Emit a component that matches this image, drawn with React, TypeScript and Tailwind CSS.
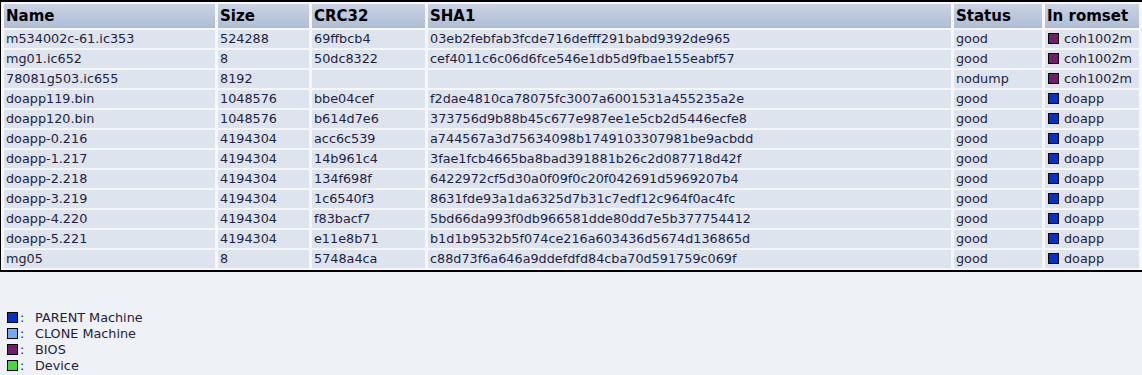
import React from "react";

type Rom = {
	name: string;
	size: string;
	crc: string;
	sha1: string;
	status: string;
	set: string;
	kind: "bios" | "parent";
};

const roms: Rom[] = [
	{ name: "m534002c-61.ic353", size: "524288", crc: "69ffbcb4", sha1: "03eb2febfab3fcde716defff291babd9392de965", status: "good", set: "coh1002m", kind: "bios" },
	{ name: "mg01.ic652", size: "8", crc: "50dc8322", sha1: "cef4011c6c06d6fce546e1db5d9fbae155eabf57", status: "good", set: "coh1002m", kind: "bios" },
	{ name: "78081g503.ic655", size: "8192", crc: "", sha1: "", status: "nodump", set: "coh1002m", kind: "bios" },
	{ name: "doapp119.bin", size: "1048576", crc: "bbe04cef", sha1: "f2dae4810ca78075fc3007a6001531a455235a2e", status: "good", set: "doapp", kind: "parent" },
	{ name: "doapp120.bin", size: "1048576", crc: "b614d7e6", sha1: "373756d9b88b45c677e987ee1e5cb2d5446ecfe8", status: "good", set: "doapp", kind: "parent" },
	{ name: "doapp-0.216", size: "4194304", crc: "acc6c539", sha1: "a744567a3d75634098b1749103307981be9acbdd", status: "good", set: "doapp", kind: "parent" },
	{ name: "doapp-1.217", size: "4194304", crc: "14b961c4", sha1: "3fae1fcb4665ba8bad391881b26c2d087718d42f", status: "good", set: "doapp", kind: "parent" },
	{ name: "doapp-2.218", size: "4194304", crc: "134f698f", sha1: "6422972cf5d30a0f09f0c20f042691d5969207b4", status: "good", set: "doapp", kind: "parent" },
	{ name: "doapp-3.219", size: "4194304", crc: "1c6540f3", sha1: "8631fde93a1da6325d7b31c7edf12c964f0ac4fc", status: "good", set: "doapp", kind: "parent" },
	{ name: "doapp-4.220", size: "4194304", crc: "f83bacf7", sha1: "5bd66da993f0db966581dde80dd7e5b377754412", status: "good", set: "doapp", kind: "parent" },
	{ name: "doapp-5.221", size: "4194304", crc: "e11e8b71", sha1: "b1d1b9532b5f074ce216a603436d5674d136865d", status: "good", set: "doapp", kind: "parent" },
	{ name: "mg05", size: "8", crc: "5748a4ca", sha1: "c88d73f6a646a9ddefdfd84cba70d591759c069f", status: "good", set: "doapp", kind: "parent" },
];

const Swatch = ({ color }: { color: string }) => (
	<span className={`inline-block h-[11px] w-[11px] shrink-0 border border-black ${color}`} />
);

const legend = [
	{ color: "bg-[#0033c4]", label: "PARENT Machine" },
	{ color: "bg-[#74aaf4]", label: "CLONE Machine" },
	{ color: "bg-[#721c6c]", label: "BIOS" },
	{ color: "bg-[#44d83c]", label: "Device" },
];

const headers = ["Name", "Size", "CRC32", "SHA1", "Status", "In romset"];

export default function App() {
	return (
		<div className="h-[375px] w-[1142px] overflow-hidden bg-[#eef1f6] font-['DejaVu_Sans',sans-serif] text-[12.8px] text-[#1d2340]">
			<table className="w-[1142px] table-fixed border-separate border-t-2 border-b-2 border-l border-black bg-[#f5f7fa] [border-spacing:3px_2px]">
				<colgroup>
					<col className="w-[211px]" />
					<col className="w-[91px]" />
					<col className="w-[113px]" />
					<col className="w-[523px]" />
					<col className="w-[88px]" />
					<col className="w-[94px]" />
				</colgroup>
				<thead>
					<tr className="h-[24px]">
						{headers.map((h) => (
							<th
								key={h}
								className="bg-gradient-to-b from-[#c9d3e3] to-[#afbdd4] px-[2px] pt-px text-left align-middle text-[15px] font-bold leading-none text-black"
							>
								{h}
							</th>
						))}
					</tr>
				</thead>
				<tbody>
					{roms.map((r) => (
						<tr key={r.name} className="h-[18px]">
							<td className="bg-[#dde4ee] px-[2px] pt-px leading-none">{r.name}</td>
							<td className="bg-[#dde4ee] px-[2px] pt-px leading-none">{r.size}</td>
							<td className="bg-[#dde4ee] px-[2px] pt-px leading-none">{r.crc}</td>
							<td className="bg-[#dde4ee] px-[2px] pt-px leading-none">{r.sha1}</td>
							<td className="bg-[#dde4ee] px-[2px] pt-px leading-none">{r.status}</td>
							<td className="bg-[#dde4ee] px-[3px] leading-none">
								<span className="flex items-center gap-[5px]">
									<Swatch color={r.kind === "bios" ? "bg-[#721c6c]" : "bg-[#0033c4]"} />
									<span className="pt-px">{r.set}</span>
								</span>
							</td>
						</tr>
					))}
				</tbody>
			</table>
			<div className="mt-[37px] flex flex-col pl-[7px]">
				{legend.map((l) => (
					<div key={l.label} className="flex h-4 items-center">
						<Swatch color={l.color} />
						<span className="ml-[2px] w-[14px] pt-px">:</span>
						<span className="ml-[1px] pt-px">{l.label}</span>
					</div>
				))}
			</div>
		</div>
	);
}
